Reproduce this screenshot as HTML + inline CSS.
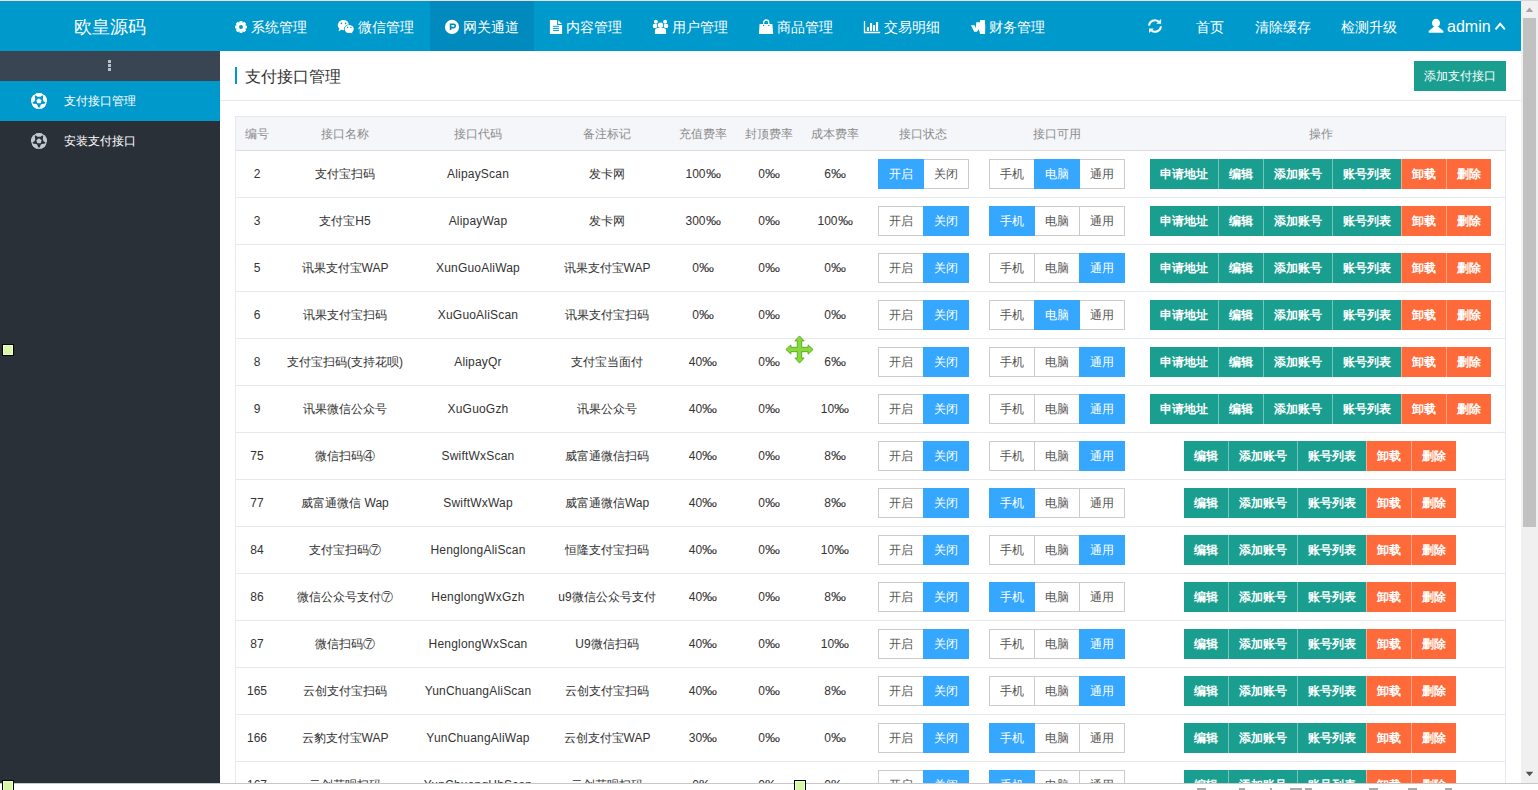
<!DOCTYPE html><html><head><meta charset="utf-8"><style>*{margin:0;padding:0;box-sizing:border-box}
html,body{width:1538px;height:790px;overflow:hidden;background:#fff;font-family:"Liberation Sans",sans-serif;font-size:12px;color:#333}
.topline{position:absolute;left:0;top:0;width:1521px;height:1px;background:#efdcd6}
.header{position:absolute;left:0;top:1px;width:1521px;height:50px;background:#0099cc;color:#fff}
.logo{position:absolute;left:0;top:0;width:220px;height:50px;line-height:52px;text-align:center;font-size:18px}
.nav{position:absolute;top:0;height:50px;line-height:52px;font-size:14px;white-space:nowrap}
.nav .ic{position:absolute;top:0}
.nav.act{background:#008abd}
.side{position:absolute;left:0;top:51px;width:220px;height:739px;background:#2a3038}
.tog{position:absolute;left:0;top:0;width:220px;height:30px;background:#3a4554}
.mi{position:absolute;left:0;width:220px;height:40px;line-height:40px;color:#fff;font-size:12px}
.mi.act{background:#0099cc}
.main{position:absolute;left:220px;top:51px;width:1301px;height:739px;background:#fff}
.title{position:absolute;left:25px;top:17px;font-size:16px;color:#333;line-height:17px}
.tbar{position:absolute;left:15px;top:16px;width:2px;height:17px;background:#0099cc}
.sep{position:absolute;left:0;top:49px;width:1301px;height:1px;background:#e6e9ed}
.addbtn{position:absolute;left:1194px;top:10px;width:92px;height:30px;line-height:30px;text-align:center;background:#1a9e8f;color:#fff;font-size:12px}
table{position:absolute;left:15px;top:65px;border-collapse:separate;border-spacing:0;table-layout:fixed;width:1271px;border:1px solid #e6eaf0}
th,td{text-align:center;padding:0;white-space:nowrap}
th{height:34px;padding-top:2px;background:#f5f6fa;color:#8c8c8c;font-weight:normal;border-bottom:1px solid #ddd}
td{height:47px;border-bottom:1px solid #e6e9ed}
tbl-wrap{}
.grp{display:inline-flex;vertical-align:middle}
.b{display:inline-block;height:30px;line-height:28px;padding:0 10px;border:1px solid #ccc;color:#555;background:#fff;margin-left:-1px}
.b:first-child{margin-left:0}
.b.on{background:#35a7ff;border-color:#35a7ff;color:#fff;position:relative}
.ops{display:inline-flex;vertical-align:middle}
.ops span{display:inline-block;height:30px;line-height:30px;padding:0 10px;color:#fff;font-weight:bold;border-left:1px solid rgba(255,255,255,.4)}
.ops span:first-child{border-left:0}
.t{background:#1a9e8f}
.o{background:#ff6a3a}
.sb{position:absolute;left:1521px;top:0;width:17px;height:790px;background:#f0f0f0}
.thumb{position:absolute;left:2px;top:18px;width:13px;height:509px;background:#c1c1c1}
.bottom{position:absolute;left:0;top:783px;width:1538px;height:7px;background:#fff;border-top:1px solid #c8c8c8}
.h{position:absolute;width:12px;height:12px;background:#d8f6a8;border:1px solid #000;box-shadow:inset 0 0 0 1px #ebffc8}
.ov{position:absolute;left:0;top:0}
.dot{position:absolute;left:108px;width:3px;height:3px;background:#b8bfca}
.pm{display:inline-block;transform:scaleX(1.25);transform-origin:0 50%;margin-right:3px}

.st{position:relative;left:0.5px}
td:nth-child(3){letter-spacing:0.2px}
.o5{position:relative;left:-0.5px}
</style></head><body><div class="topline"></div>
<div class="header">
  <div class="logo">欧皇源码</div>
  <div class="nav" style="left:251px">系统管理</div>
  <div class="nav" style="left:358px">微信管理</div>
  <div class="nav act" style="left:430px;width:104px;padding-left:33px">网关通道</div>
  <div class="nav" style="left:566px">内容管理</div>
  <div class="nav" style="left:672px">用户管理</div>
  <div class="nav" style="left:777px">商品管理</div>
  <div class="nav" style="left:884px">交易明细</div>
  <div class="nav" style="left:989px">财务管理</div>
  <div class="nav" style="left:1196px">首页</div>
  <div class="nav" style="left:1255px">清除缓存</div>
  <div class="nav" style="left:1341px">检测升级</div>
  <div class="nav" style="left:1447px;font-size:16px">admin</div>
</div>
<svg class="ov" width="1538" height="60" viewBox="0 0 1538 60">
<g fill="#fff">
<path fill-rule="evenodd" d="M245.25,25.25 L246.95,25.67 L246.95,28.33 L245.25,28.75 L246.15,30.27 L244.27,32.15 L242.77,31.25 L242.33,32.95 L239.67,32.95 L239.25,31.25 L237.73,32.15 L235.85,30.27 L236.75,28.77 L235.05,28.33 L235.05,25.67 L236.75,25.25 L235.85,23.73 L237.73,21.85 L239.23,22.75 L239.67,21.05 L242.33,21.05 L242.75,22.75 L244.27,21.85 L246.15,23.73 Z M243,27 A2,2 0 1 0 239,27 A2,2 0 1 0 243,27 Z"/>
<!-- wechat -->
<ellipse cx="343.4" cy="25.2" rx="5.6" ry="5.1"/>
<path d="M339.2,28.8 L338.6,31.2 L341.6,29.8 Z"/>
<ellipse cx="349.2" cy="29.1" rx="5.3" ry="4.6" fill="#0099cc"/>
<ellipse cx="349.2" cy="29.1" rx="4.6" ry="4"/>
<path d="M351.6,32 L352.6,33.4 L350.2,32.8 Z"/>
<g fill="#0099cc"><circle cx="341.4" cy="23.4" r="0.8"/><circle cx="345.6" cy="23.4" r="0.8"/><circle cx="347.6" cy="27.4" r="0.65"/><circle cx="350.9" cy="27.4" r="0.65"/></g>
<!-- P circle -->
<circle cx="452" cy="26.9" r="7.1"/>
<path d="M450.6,30 V24.2 H453.6 A1.7,1.7 0 0 1 453.6,27.6 H450.6" fill="none" stroke="#008abd" stroke-width="1.6"/>
<!-- file -->
<path d="M549.9,20 H557.1 V24.9 H562.1 V33.9 H549.9 Z"/>
<path d="M558.2,20.2 L562.1,24 H558.2 Z"/>
<g fill="#0099cc"><rect x="552.9" y="25.8" width="6.2" height="1"/><rect x="552.9" y="27.9" width="6.2" height="1"/><rect x="552.9" y="29.9" width="6.2" height="1"/></g>
<!-- users -->
<circle cx="655.9" cy="21.8" r="2"/><circle cx="665.1" cy="21.8" r="2"/>
<rect x="652.9" y="24" width="4.4" height="3.9" rx="1.2"/><rect x="663.7" y="24" width="4.4" height="3.9" rx="1.2"/>
<circle cx="660.5" cy="25.2" r="3.3" fill="#0099cc"/>
<path d="M654.2,34.6 V30.5 Q654.2,27.4 657.5,27.4 H663.5 Q666.8,27.4 666.8,30.5 V34.6 Z" fill="#0099cc"/>
<circle cx="660.5" cy="25.2" r="2.7"/>
<path d="M654.9,33.9 V30.8 Q654.9,28.1 657.7,28.1 H663.3 Q666.1,28.1 666.1,30.8 V33.9 Z"/>
<!-- bag -->
<path d="M759.6,24 H772.4 L773.2,33.9 H758.9 Z"/>
<path d="M763.6,25 V22.6 A2.6,2.6 0 0 1 768.8,22.6 V25" fill="none" stroke="#fff" stroke-width="1.3"/>
<g fill="#0099cc"><circle cx="763.6" cy="25.5" r="0.7"/><circle cx="768.8" cy="25.5" r="0.7"/></g>
<!-- chart -->
<path d="M864.5,21 V32.5 H880.2" fill="none" stroke="#fff" stroke-width="1.3"/>
<rect x="866.9" y="27.2" width="2.1" height="3.8"/><rect x="870" y="23" width="2.1" height="8"/><rect x="873" y="25" width="2.1" height="6"/><rect x="876" y="22" width="2.1" height="9"/>
<!-- money W -->
<path d="M970.9,25.2 H974.6 L975.8,28.3 L976.3,22.3 H979.9 L980.2,20.1 H984.8 Q985.6,27 985.1,33.9 H980.2 L978.6,29.3 L977,31.8 H974.2 Z"/>
<!-- refresh -->
<path d="M1149,25.6 A6,6 0 0 1 1158.6,21.5" fill="none" stroke="#fff" stroke-width="2"/>
<path d="M1161.1,19 V23.8 H1156.3 Z"/>
<path d="M1161,26.4 A6,6 0 0 1 1151.4,30.5" fill="none" stroke="#fff" stroke-width="2"/>
<path d="M1149,33 V28.4 H1153.8 Z"/>
<!-- user -->
<ellipse cx="1436" cy="23" rx="4" ry="4.3"/>
<path d="M1433.6,27 H1438.6 L1443.4,31 V32.8 H1428.7 V31 Z"/>
<!-- chevron -->
<path d="M1495.5,29.3 L1500.2,23.8 L1504.9,29.3" fill="none" stroke="#fff" stroke-width="1.9"/>
</g>
</svg>

<div class="side">
  <div class="tog"><div class="dot" style="top:9px"></div><div class="dot" style="top:13px"></div><div class="dot" style="top:17px"></div></div>
  <div class="mi act" style="top:30px"><span style="position:absolute;left:64px">支付接口管理</span></div>
  <div class="mi" style="top:70px"><span style="position:absolute;left:64px">安装支付接口</span></div>
  <svg style="position:absolute;left:0;top:0" width="60" height="120" viewBox="0 51 60 120"><clipPath id="c1"><circle cx="39" cy="101" r="8"/></clipPath><g clip-path="url(#c1)"><circle cx="39" cy="101" r="8" fill="#fff"/><polygon points="35.06,95.58 42.94,95.58 45.37,103.07 39.00,107.70 32.63,103.07" fill="#0099cc"/><g fill="#fff"><circle cx="39.00" cy="93.40" r="3.4"/><circle cx="46.23" cy="98.65" r="3.4"/><circle cx="43.47" cy="107.15" r="3.4"/><circle cx="34.53" cy="107.15" r="3.4"/><circle cx="31.77" cy="98.65" r="3.4"/></g><polygon points="39.00,98.20 41.66,100.13 40.65,103.27 37.35,103.27 36.34,100.13" fill="#fff"/></g><clipPath id="c2"><circle cx="39" cy="141" r="8"/></clipPath><g clip-path="url(#c2)"><circle cx="39" cy="141" r="8" fill="#c2c7d0"/><polygon points="35.06,135.58 42.94,135.58 45.37,143.07 39.00,147.70 32.63,143.07" fill="#2a3038"/><g fill="#c2c7d0"><circle cx="39.00" cy="133.40" r="3.4"/><circle cx="46.23" cy="138.65" r="3.4"/><circle cx="43.47" cy="147.15" r="3.4"/><circle cx="34.53" cy="147.15" r="3.4"/><circle cx="31.77" cy="138.65" r="3.4"/></g><polygon points="39.00,138.20 41.66,140.13 40.65,143.27 37.35,143.27 36.34,140.13" fill="#c2c7d0"/></g></svg>
</div>
<div class="main">
  <div class="tbar"></div>
  <div class="title">支付接口管理</div>
  <div class="addbtn">添加支付接口</div>
  <div class="sep"></div>
  <table>
    <colgroup><col style="width:42px"><col style="width:134px"><col style="width:132px"><col style="width:126px"><col style="width:66px"><col style="width:66px"><col style="width:66px"><col style="width:110px"><col style="width:158px"><col style="width:369px"></colgroup>
    <tr><th>编号</th><th>接口名称</th><th>接口代码</th><th>备注标记</th><th>充值费率</th><th>封顶费率</th><th>成本费率</th><th>接口状态</th><th>接口可用</th><th>操作</th></tr>
<tr><td>2</td><td>支付宝扫码</td><td>AlipayScan</td><td>发卡网</td><td>100<span class="pm">‰</span></td><td>0<span class="pm">‰</span></td><td>6<span class="pm">‰</span></td><td><div class="st"><div class="grp"><span class="b on">开启</span><span class="b">关闭</span></div></div></td><td><div class="grp"><span class="b">手机</span><span class="b on">电脑</span><span class="b">通用</span></div></td><td><div class="ops"><span class="t">申请地址</span><span class="t">编辑</span><span class="t">添加账号</span><span class="t">账号列表</span><span class="o">卸载</span><span class="o">删除</span></div></td></tr>
<tr><td>3</td><td>支付宝H5</td><td>AlipayWap</td><td>发卡网</td><td>300<span class="pm">‰</span></td><td>0<span class="pm">‰</span></td><td>100<span class="pm">‰</span></td><td><div class="st"><div class="grp"><span class="b">开启</span><span class="b on">关闭</span></div></div></td><td><div class="grp"><span class="b on">手机</span><span class="b">电脑</span><span class="b">通用</span></div></td><td><div class="ops"><span class="t">申请地址</span><span class="t">编辑</span><span class="t">添加账号</span><span class="t">账号列表</span><span class="o">卸载</span><span class="o">删除</span></div></td></tr>
<tr><td>5</td><td>讯果支付宝WAP</td><td>XunGuoAliWap</td><td>讯果支付宝WAP</td><td>0<span class="pm">‰</span></td><td>0<span class="pm">‰</span></td><td>0<span class="pm">‰</span></td><td><div class="st"><div class="grp"><span class="b">开启</span><span class="b on">关闭</span></div></div></td><td><div class="grp"><span class="b">手机</span><span class="b">电脑</span><span class="b on">通用</span></div></td><td><div class="ops"><span class="t">申请地址</span><span class="t">编辑</span><span class="t">添加账号</span><span class="t">账号列表</span><span class="o">卸载</span><span class="o">删除</span></div></td></tr>
<tr><td>6</td><td>讯果支付宝扫码</td><td>XuGuoAliScan</td><td>讯果支付宝扫码</td><td>0<span class="pm">‰</span></td><td>0<span class="pm">‰</span></td><td>0<span class="pm">‰</span></td><td><div class="st"><div class="grp"><span class="b">开启</span><span class="b on">关闭</span></div></div></td><td><div class="grp"><span class="b">手机</span><span class="b on">电脑</span><span class="b">通用</span></div></td><td><div class="ops"><span class="t">申请地址</span><span class="t">编辑</span><span class="t">添加账号</span><span class="t">账号列表</span><span class="o">卸载</span><span class="o">删除</span></div></td></tr>
<tr><td>8</td><td>支付宝扫码(支持花呗)</td><td>AlipayQr</td><td>支付宝当面付</td><td>40<span class="pm">‰</span></td><td>0<span class="pm">‰</span></td><td>6<span class="pm">‰</span></td><td><div class="st"><div class="grp"><span class="b">开启</span><span class="b on">关闭</span></div></div></td><td><div class="grp"><span class="b">手机</span><span class="b">电脑</span><span class="b on">通用</span></div></td><td><div class="ops"><span class="t">申请地址</span><span class="t">编辑</span><span class="t">添加账号</span><span class="t">账号列表</span><span class="o">卸载</span><span class="o">删除</span></div></td></tr>
<tr><td>9</td><td>讯果微信公众号</td><td>XuGuoGzh</td><td>讯果公众号</td><td>40<span class="pm">‰</span></td><td>0<span class="pm">‰</span></td><td>10<span class="pm">‰</span></td><td><div class="st"><div class="grp"><span class="b">开启</span><span class="b on">关闭</span></div></div></td><td><div class="grp"><span class="b">手机</span><span class="b">电脑</span><span class="b on">通用</span></div></td><td><div class="ops"><span class="t">申请地址</span><span class="t">编辑</span><span class="t">添加账号</span><span class="t">账号列表</span><span class="o">卸载</span><span class="o">删除</span></div></td></tr>
<tr><td>75</td><td>微信扫码④</td><td>SwiftWxScan</td><td>威富通微信扫码</td><td>40<span class="pm">‰</span></td><td>0<span class="pm">‰</span></td><td>8<span class="pm">‰</span></td><td><div class="st"><div class="grp"><span class="b">开启</span><span class="b on">关闭</span></div></div></td><td><div class="grp"><span class="b">手机</span><span class="b">电脑</span><span class="b on">通用</span></div></td><td><div class="ops o5"><span class="t">编辑</span><span class="t">添加账号</span><span class="t">账号列表</span><span class="o">卸载</span><span class="o">删除</span></div></td></tr>
<tr><td>77</td><td>威富通微信 Wap</td><td>SwiftWxWap</td><td>威富通微信Wap</td><td>40<span class="pm">‰</span></td><td>0<span class="pm">‰</span></td><td>8<span class="pm">‰</span></td><td><div class="st"><div class="grp"><span class="b">开启</span><span class="b on">关闭</span></div></div></td><td><div class="grp"><span class="b on">手机</span><span class="b">电脑</span><span class="b">通用</span></div></td><td><div class="ops o5"><span class="t">编辑</span><span class="t">添加账号</span><span class="t">账号列表</span><span class="o">卸载</span><span class="o">删除</span></div></td></tr>
<tr><td>84</td><td>支付宝扫码⑦</td><td>HenglongAliScan</td><td>恒隆支付宝扫码</td><td>40<span class="pm">‰</span></td><td>0<span class="pm">‰</span></td><td>10<span class="pm">‰</span></td><td><div class="st"><div class="grp"><span class="b">开启</span><span class="b on">关闭</span></div></div></td><td><div class="grp"><span class="b">手机</span><span class="b">电脑</span><span class="b on">通用</span></div></td><td><div class="ops o5"><span class="t">编辑</span><span class="t">添加账号</span><span class="t">账号列表</span><span class="o">卸载</span><span class="o">删除</span></div></td></tr>
<tr><td>86</td><td>微信公众号支付⑦</td><td>HenglongWxGzh</td><td>u9微信公众号支付</td><td>40<span class="pm">‰</span></td><td>0<span class="pm">‰</span></td><td>8<span class="pm">‰</span></td><td><div class="st"><div class="grp"><span class="b">开启</span><span class="b on">关闭</span></div></div></td><td><div class="grp"><span class="b on">手机</span><span class="b">电脑</span><span class="b">通用</span></div></td><td><div class="ops o5"><span class="t">编辑</span><span class="t">添加账号</span><span class="t">账号列表</span><span class="o">卸载</span><span class="o">删除</span></div></td></tr>
<tr><td>87</td><td>微信扫码⑦</td><td>HenglongWxScan</td><td>U9微信扫码</td><td>40<span class="pm">‰</span></td><td>0<span class="pm">‰</span></td><td>10<span class="pm">‰</span></td><td><div class="st"><div class="grp"><span class="b">开启</span><span class="b on">关闭</span></div></div></td><td><div class="grp"><span class="b">手机</span><span class="b">电脑</span><span class="b on">通用</span></div></td><td><div class="ops o5"><span class="t">编辑</span><span class="t">添加账号</span><span class="t">账号列表</span><span class="o">卸载</span><span class="o">删除</span></div></td></tr>
<tr><td>165</td><td>云创支付宝扫码</td><td>YunChuangAliScan</td><td>云创支付宝扫码</td><td>40<span class="pm">‰</span></td><td>0<span class="pm">‰</span></td><td>8<span class="pm">‰</span></td><td><div class="st"><div class="grp"><span class="b">开启</span><span class="b on">关闭</span></div></div></td><td><div class="grp"><span class="b">手机</span><span class="b">电脑</span><span class="b on">通用</span></div></td><td><div class="ops o5"><span class="t">编辑</span><span class="t">添加账号</span><span class="t">账号列表</span><span class="o">卸载</span><span class="o">删除</span></div></td></tr>
<tr><td>166</td><td>云豹支付宝WAP</td><td>YunChuangAliWap</td><td>云创支付宝WAP</td><td>30<span class="pm">‰</span></td><td>0<span class="pm">‰</span></td><td>0<span class="pm">‰</span></td><td><div class="st"><div class="grp"><span class="b">开启</span><span class="b on">关闭</span></div></div></td><td><div class="grp"><span class="b on">手机</span><span class="b">电脑</span><span class="b">通用</span></div></td><td><div class="ops o5"><span class="t">编辑</span><span class="t">添加账号</span><span class="t">账号列表</span><span class="o">卸载</span><span class="o">删除</span></div></td></tr>
<tr><td>167</td><td>云创花呗扫码</td><td>YunChuangHbScan</td><td>云创花呗扫码</td><td>0<span class="pm">‰</span></td><td>0<span class="pm">‰</span></td><td>0<span class="pm">‰</span></td><td><div class="st"><div class="grp"><span class="b">开启</span><span class="b on">关闭</span></div></div></td><td><div class="grp"><span class="b on">手机</span><span class="b">电脑</span><span class="b">通用</span></div></td><td><div class="ops o5"><span class="t">编辑</span><span class="t">添加账号</span><span class="t">账号列表</span><span class="o">卸载</span><span class="o">删除</span></div></td></tr>
  </table>
</div>
<div class="sb"><div class="thumb"></div>
  <svg style="position:absolute;left:0;top:0" width="17" height="790" viewBox="1521 0 17 790">
    <path d="M1525.8,12.1 L1529.5,7.6 L1533.2,12.1 Z" fill="#a3a3a3"/>
    <path d="M1525.8,771.8 L1529.5,776.3 L1533.2,771.8 Z" fill="#505050"/>
  </svg>
</div>
<div class="bottom"></div><div style="position:absolute;left:1521px;top:0;width:17px;height:1px;background:#d6d6d6"></div><div style="position:absolute;left:0;top:788px;width:1538px;height:2px"><div style="position:absolute;left:1197px;top:0;width:9px;height:2px;background:#aaaaaa"></div><div style="position:absolute;left:1239px;top:0;width:6px;height:2px;background:#aaaaaa"></div><div style="position:absolute;left:1270px;top:0;width:2px;height:2px;background:#aaaaaa"></div><div style="position:absolute;left:1290px;top:0;width:12px;height:2px;background:#aaaaaa"></div><div style="position:absolute;left:1305px;top:0;width:7px;height:2px;background:#aaaaaa"></div><div style="position:absolute;left:1369px;top:0;width:9px;height:2px;background:#aaaaaa"></div><div style="position:absolute;left:1408px;top:0;width:9px;height:2px;background:#aaaaaa"></div><div style="position:absolute;left:1445px;top:0;width:7px;height:2px;background:#aaaaaa"></div></div>
<div class="h" style="left:2px;top:344px"></div>
<div class="h" style="left:2px;top:780px"></div>
<div class="h" style="left:794px;top:780px"></div>
<svg style="position:absolute;left:780px;top:330px" width="40" height="40" viewBox="780 330 40 40">
  <path d="M799.5,335.9 L804.1,340.9 L801.7,340.9 L801.7,347.3 L808.1,347.3 L808.1,344.9 L813.1,349.5 L808.1,354.1 L808.1,351.7 L801.7,351.7 L801.7,358.1 L804.1,358.1 L799.5,363.1 L794.9,358.1 L797.3,358.1 L797.3,351.7 L790.9,351.7 L790.9,354.1 L785.9,349.5 L790.9,344.9 L790.9,347.3 L797.3,347.3 L797.3,340.9 L794.9,340.9 Z" fill="#88da3c" stroke="#55a618" stroke-width="0.9"/>
</svg>
</body></html>
